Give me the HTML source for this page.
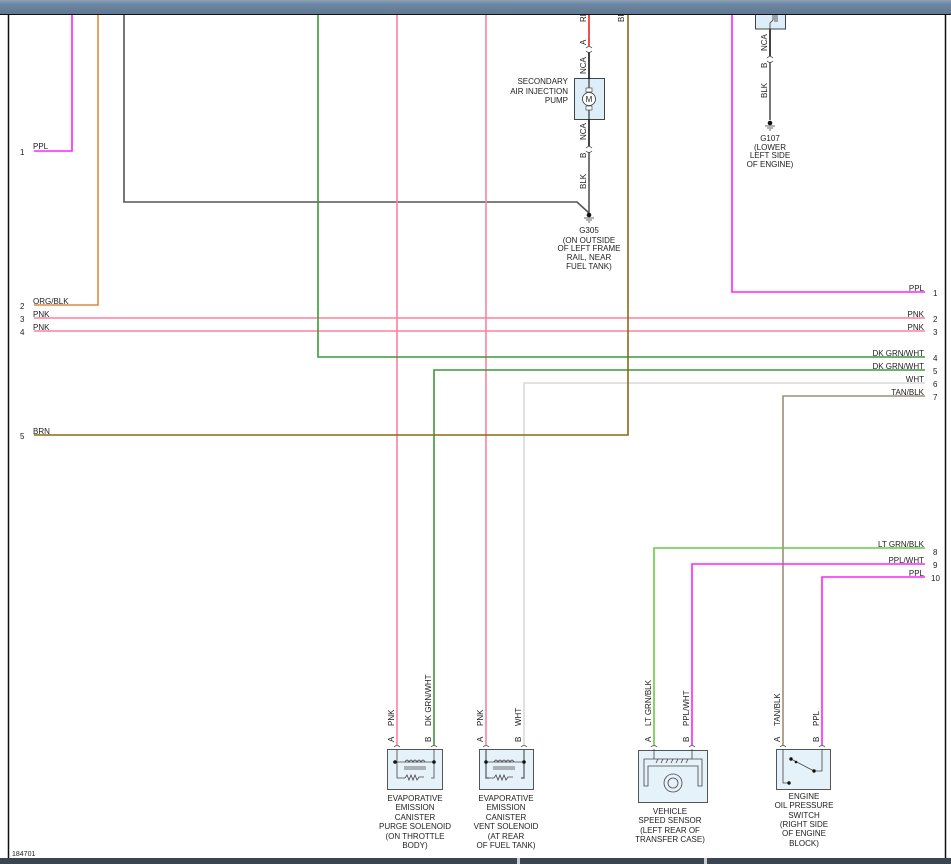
<!DOCTYPE html>
<html><head><meta charset="utf-8"><style>
html,body{margin:0;padding:0;background:#fff;width:951px;height:864px;overflow:hidden}
svg{display:block}
text{font-family:"Liberation Sans",sans-serif;font-size:8px;fill:#222}
.c{text-anchor:middle}
.r{text-anchor:end}
</style></head><body>
<svg width="951" height="864" viewBox="0 0 951 864" xmlns="http://www.w3.org/2000/svg">
<defs>
<linearGradient id="hb" x1="0" y1="0" x2="0" y2="1"><stop offset="0" stop-color="#8aa0b6"/><stop offset="0.3" stop-color="#6d87a2"/><stop offset="1" stop-color="#5f7893"/></linearGradient>
</defs>
<line x1="8.5" y1="14" x2="8.5" y2="858" stroke="#111" stroke-width="1.5"/>
<line x1="945.5" y1="14" x2="945.5" y2="858" stroke="#111" stroke-width="1.5"/>
<rect x="0" y="858" width="951" height="6" fill="#3a4452"/>
<rect x="517" y="858" width="3" height="6" fill="#c8ccd2"/>
<rect x="704" y="858" width="3" height="6" fill="#c8ccd2"/>

<g fill="none" stroke-width="1.6">
<polyline points="72,14 72,151 34,151" stroke="#ff22ff"/>
<polyline points="98,14 98,305 34,305" stroke="#e08a40"/>
<polyline points="124,14 124,202 577,202 589,213" stroke="#555"/>
<line x1="34" y1="318" x2="925" y2="318" stroke="#ff7f9f"/>
<line x1="34" y1="331" x2="925" y2="331" stroke="#ff7f9f"/>
<line x1="397" y1="14" x2="397" y2="745" stroke="#ff7f9f"/>
<line x1="486" y1="14" x2="486" y2="745" stroke="#ff7f9f"/>
<polyline points="318,14 318,357 925,357" stroke="#3a9a3a"/>
<polyline points="925,370 434,370 434,745" stroke="#3a9a3a"/>
<polyline points="925,383 524,383 524,745" stroke="#d8d8d8"/>
<polyline points="925,396 783,396 783,745" stroke="#9a9078"/>
<polyline points="628,14 628,435 34,435" stroke="#8a6a10"/>
<polyline points="732,14 732,292 925,292" stroke="#ff22ff"/>
<polyline points="925,548 654,548 654,745" stroke="#66cc44"/>
<polyline points="925,564 692,564 692,745" stroke="#ff22ff"/>
<polyline points="925,577 822,577 822,745" stroke="#ff22ff"/>
<line x1="589" y1="14" x2="589" y2="46" stroke="#ee2222"/>
<line x1="589" y1="52" x2="589" y2="146" stroke="#111"/>
<line x1="589" y1="152" x2="589" y2="213" stroke="#555"/>
<line x1="770" y1="29" x2="770" y2="56" stroke="#111"/>
<line x1="770" y1="62" x2="770" y2="120" stroke="#555"/>
</g>
<g fill="none" stroke="#444" stroke-width="0.8">
<path d="M586,48 q3,-3 6,0 M586,51 q3,3 6,0"/>
<path d="M586,148 q3,-3 6,0 M586,151 q3,3 6,0"/>
<path d="M767,58 q3,-3 6,0 M767,61 q3,3 6,0"/>
<path d="M394,747 q3,-3 6,0 M431,747 q3,-3 6,0 M483,747 q3,-3 6,0 M521,747 q3,-3 6,0 M651,747 q3,-3 6,0 M689,747 q3,-3 6,0 M780,747 q3,-3 6,0 M819,747 q3,-3 6,0"/>
</g>
<g fill="#111"><circle cx="589" cy="215" r="2.3"/><circle cx="770" cy="123" r="2.3"/></g>
<g stroke="#333" stroke-width="0.8"><path d="M584,218h10M586,220h6M588,222h2M765,126h10M767,128h6M769,130h2"/></g>

<rect x="574.5" y="78.5" width="30" height="41" fill="#ddeef8" stroke="#444"/>
<line x1="589" y1="78" x2="589" y2="88" stroke="#111"/><line x1="589" y1="110" x2="589" y2="120" stroke="#111"/>
<rect x="586" y="88" width="6" height="4" fill="#fff" stroke="#333" stroke-width="0.6"/>
<rect x="586" y="106" width="6" height="4" fill="#fff" stroke="#333" stroke-width="0.6"/>
<circle cx="589" cy="99" r="6.5" fill="#fff" stroke="#333" stroke-width="0.8"/>
<text x="589" y="102" class="c" style="font-size:8px">M</text>
<rect x="755.5" y="4" width="30" height="25" fill="#ddeef8" stroke="#444"/>
<path d="M770,29 v-6 l3,-3 v-5 M775,15v7M777,15v7" stroke="#333" fill="none" stroke-width="0.8"/>

<g>
<rect x="387.5" y="749.5" width="55" height="40" fill="#e6f2fa" stroke="#555"/>
<g fill="none" stroke="#444" stroke-width="0.8">
<path d="M397,749 v29 h3 M434,749 v29 h-3"/>
<path d="M395,762 h39 M400,778 h5 l2,-3 2,5 2,-5 2,5 2,-5 2,5 2,-3 h5"/>
<path d="M405,762 q2,-4 4,0 q2,-4 4,0 q2,-4 4,0 q2,-4 4,0 q2,-4 4,0"/>
<path d="M404,767 h22 M404,769 h22"/>
</g>
<circle cx="395" cy="762" r="1.8" fill="#111"/><circle cx="434" cy="762" r="1.8" fill="#111"/>
</g>
<g>
<rect x="479.5" y="749.5" width="54" height="40" fill="#e6f2fa" stroke="#555"/>
<g fill="none" stroke="#555" stroke-width="1.2">
<path d="M486,749 v29 h3 M524,749 v29 h-3"/>
</g>
<g fill="none" stroke="#444" stroke-width="0.8">
<path d="M486,762 h38 M489,778 h5 l2,-3 2,5 2,-5 2,5 2,-5 2,5 2,-3 h5"/>
<path d="M494,762 q2,-4 4,0 q2,-4 4,0 q2,-4 4,0 q2,-4 4,0 q2,-4 4,0"/>
<path d="M493,767 h22 M493,769 h22"/>
</g>
<circle cx="486" cy="762" r="1.8" fill="#111"/><circle cx="524" cy="762" r="1.8" fill="#111"/>
</g>
<g>
<rect x="638.5" y="750.5" width="69" height="52" fill="#e6f2fa" stroke="#555"/>
<g fill="none" stroke="#444" stroke-width="0.8">
<path d="M654,749 v10 M692,749 v10"/>
<path d="M644,786 v-27 h58 v27 h-4 v-20 h-50 v20 z"/>
<path d="M656,763 l2,-4 M661,763 l2,-4 M666,763 l2,-4 M671,763 l2,-4 M676,763 l2,-4 M681,763 l2,-4 M686,763 l2,-4"/>
<circle cx="673" cy="783" r="9"/>
<circle cx="673" cy="783" r="5"/>
</g>
</g>
<g>
<rect x="776.5" y="749.5" width="54" height="40" fill="#e6f2fa" stroke="#555"/>
<g fill="none" stroke="#444" stroke-width="0.8">
<path d="M783,749 v34 h6 M822,749 v22 h-8 M791,759 l23,12"/>
</g>
<g fill="#111"><circle cx="789" cy="783" r="1.7"/><circle cx="791" cy="759" r="1.7"/><circle cx="796" cy="762" r="1.3"/><circle cx="814" cy="771" r="1.7"/></g>
</g>

<text x="33" y="149">PPL</text><text x="20" y="155">1</text>
<text x="33" y="304">ORG/BLK</text><text x="20" y="309">2</text>
<text x="33" y="317">PNK</text><text x="20" y="322">3</text>
<text x="33" y="330">PNK</text><text x="20" y="335">4</text>
<text x="33" y="434">BRN</text><text x="20" y="439">5</text>
<text x="924" y="291" class="r">PPL</text>
<text x="924" y="317" class="r">PNK</text>
<text x="924" y="330" class="r">PNK</text>
<text x="924" y="356" class="r">DK GRN/WHT</text>
<text x="924" y="369" class="r">DK GRN/WHT</text>
<text x="924" y="382" class="r">WHT</text>
<text x="924" y="395" class="r">TAN/BLK</text>
<text x="924" y="547" class="r">LT GRN/BLK</text>
<text x="924" y="563" class="r">PPL/WHT</text>
<text x="924" y="576" class="r">PPL</text>
<text x="933" y="296">1</text><text x="933" y="322">2</text><text x="933" y="335">3</text>
<text x="933" y="361">4</text><text x="933" y="374">5</text><text x="933" y="387">6</text>
<text x="933" y="400">7</text><text x="933" y="555">8</text><text x="933" y="568">9</text><text x="931" y="581">10</text>

<g>
<text transform="translate(586,22) rotate(-90)">RED</text>
<text transform="translate(624,22) rotate(-90)">BRN</text>
<text transform="translate(586,45) rotate(-90)">A</text>
<text transform="translate(586,74) rotate(-90)">NCA</text>
<text transform="translate(586,140) rotate(-90)">NCA</text>
<text transform="translate(586,158) rotate(-90)">B</text>
<text transform="translate(586,189) rotate(-90)">BLK</text>
<text transform="translate(767,51) rotate(-90)">NCA</text>
<text transform="translate(767,68) rotate(-90)">B</text>
<text transform="translate(767,98) rotate(-90)">BLK</text>
<text transform="translate(394,742) rotate(-90)">A</text>
<text transform="translate(394,726) rotate(-90)">PNK</text>
<text transform="translate(431,742) rotate(-90)">B</text>
<text transform="translate(431,726) rotate(-90)">DK GRN/WHT</text>
<text transform="translate(483,742) rotate(-90)">A</text>
<text transform="translate(483,726) rotate(-90)">PNK</text>
<text transform="translate(521,742) rotate(-90)">B</text>
<text transform="translate(521,726) rotate(-90)">WHT</text>
<text transform="translate(651,742) rotate(-90)">A</text>
<text transform="translate(651,726) rotate(-90)">LT GRN/BLK</text>
<text transform="translate(689,742) rotate(-90)">B</text>
<text transform="translate(689,726) rotate(-90)">PPL/WHT</text>
<text transform="translate(780,742) rotate(-90)">A</text>
<text transform="translate(780,726) rotate(-90)">TAN/BLK</text>
<text transform="translate(819,742) rotate(-90)">B</text>
<text transform="translate(819,726) rotate(-90)">PPL</text>
</g>

<text x="568" y="84" class="r">SECONDARY</text>
<text x="568" y="94" class="r">AIR INJECTION</text>
<text x="568" y="103" class="r">PUMP</text>
<text x="589" y="233" class="c">G305</text>
<text x="589" y="243" class="c">(ON OUTSIDE</text>
<text x="589" y="251" class="c">OF LEFT FRAME</text>
<text x="589" y="260" class="c">RAIL, NEAR</text>
<text x="589" y="269" class="c">FUEL TANK)</text>
<text x="770" y="141" class="c">G107</text>
<text x="770" y="150" class="c">(LOWER</text>
<text x="770" y="158" class="c">LEFT SIDE</text>
<text x="770" y="167" class="c">OF ENGINE)</text>
<text x="415" y="801" class="c">EVAPORATIVE</text>
<text x="415" y="810" class="c">EMISSION</text>
<text x="415" y="820" class="c">CANISTER</text>
<text x="415" y="829" class="c">PURGE SOLENOID</text>
<text x="415" y="839" class="c">(ON THROTTLE</text>
<text x="415" y="848" class="c">BODY)</text>
<text x="506" y="801" class="c">EVAPORATIVE</text>
<text x="506" y="810" class="c">EMISSION</text>
<text x="506" y="820" class="c">CANISTER</text>
<text x="506" y="829" class="c">VENT SOLENOID</text>
<text x="506" y="839" class="c">(AT REAR</text>
<text x="506" y="848" class="c">OF FUEL TANK)</text>
<text x="670" y="814" class="c">VEHICLE</text>
<text x="670" y="823" class="c">SPEED SENSOR</text>
<text x="670" y="833" class="c">(LEFT REAR OF</text>
<text x="670" y="842" class="c">TRANSFER CASE)</text>
<text x="804" y="799" class="c">ENGINE</text>
<text x="804" y="808" class="c">OIL PRESSURE</text>
<text x="804" y="818" class="c">SWITCH</text>
<text x="804" y="827" class="c">(RIGHT SIDE</text>
<text x="804" y="836" class="c">OF ENGINE</text>
<text x="804" y="846" class="c">BLOCK)</text>
<text x="12" y="856" style="font-size:7px">184701</text>

<rect x="0" y="0" width="951" height="14" fill="url(#hb)"/>
<line x1="0" y1="14.5" x2="951" y2="14.5" stroke="#111" stroke-width="1"/>
</svg>
</body></html>
